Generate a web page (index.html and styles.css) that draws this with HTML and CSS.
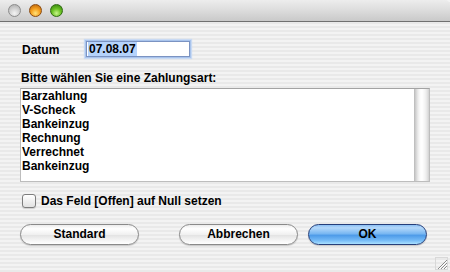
FILE: index.html
```html
<!DOCTYPE html>
<html lang="de">
<head>
<meta charset="utf-8">
<title>Zahlungsart</title>
<link rel="stylesheet" href="styles.css">
</head>
<body>
<div class="window">
  <div class="titlebar">
    <span class="light light-gray"></span>
    <span class="light light-orange"></span>
    <span class="light light-green"></span>
  </div>
  <div class="content">
    <div class="date-row">
      <span class="label">Datum</span>
      <div class="field"><span class="sel">07.08.07</span></div>
    </div>
    <div class="prompt">Bitte wählen Sie eine Zahlungsart:</div>
    <div class="list">
      <ul class="items">
        <li>Barzahlung</li>
        <li>V-Scheck</li>
        <li>Bankeinzug</li>
        <li>Rechnung</li>
        <li>Verrechnet</li>
        <li>Bankeinzug</li>
      </ul>
      <div class="scroll"></div>
    </div>
    <div class="check"><span class="box"></span><span>Das Feld [Offen] auf Null setzen</span></div>
    <div class="buttons">
      <button class="btn">Standard</button>
      <button class="btn btn-cancel">Abbrechen</button>
      <button class="btn btn-ok">OK</button>
    </div>
  </div>
  <svg class="grip" width="13" height="13" viewBox="0 0 13 13">
    <rect x="0.5" y="0.5" width="12" height="12" fill="none" stroke="#d8d8d8"/>
    <path d="M12 3 L3 12 M12 6 L6 12 M12 9 L9 12" stroke="#8a8a8a" stroke-width="1"/>
    <path d="M12 4 L4 12 M12 7 L7 12 M12 10 L10 12" stroke="#ffffff" stroke-width="1"/>
  </svg>
</div>
</body>
</html>
```
FILE: styles.css
```css
html, body {
  margin: 0;
  padding: 0;
}
body {
  width: 450px;
  height: 272px;
  overflow: hidden;
  font-family: "Liberation Sans", Arial, sans-serif;
  font-size: 12px;
  font-weight: bold;
  color: #000;
}
.window {
  position: relative;
  width: 450px;
  height: 272px;
  background: repeating-linear-gradient(to bottom, #f3f3f3 0px, #f3f3f3 2px, #e9e9e9 2px, #e9e9e9 4px);
}
.titlebar {
  height: 21px;
  border-bottom: 1px solid #707070;
  border-top-right-radius: 5px;
  background: linear-gradient(to bottom, #ededed 0%, #dcdcdc 50%, #c9c9c9 100%);
  display: flex;
  align-items: center;
  padding-left: 8px;
  box-sizing: content-box;
}
.light {
  width: 13px;
  height: 13px;
  border-radius: 50%;
  margin-right: 8px;
  box-sizing: border-box;
  margin-top: 0px;
}
.light-gray {
  background: radial-gradient(circle at 50% 75%, #f4f4f4 0%, #d4d4d4 45%, #a8a8a8 100%);
  border: 1px solid #8c8c8c;
}
.light-orange {
  background: radial-gradient(circle at 50% 75%, #ffe27a 0%, #f6a120 45%, #b45c05 100%);
  border: 1px solid #8a4a10;
}
.light-green {
  background: radial-gradient(circle at 50% 75%, #c8f58a 0%, #6bc224 45%, #2e7a0a 100%);
  border: 1px solid #2f6a12;
}
.content {
  padding-left: 20px;
}
.date-row {
  display: flex;
  align-items: center;
  margin-top: 19px;
  height: 16px;
}
.label {
  width: 64px;
  margin-left: 2px;
  line-height: 14px;
  padding-top: 1px;
}
.field {
  width: 104px;
  height: 16px;
  box-sizing: border-box;
  background: #fff;
  border: 1px solid #7b93c2;
  box-shadow: 0 0 0 1px #a9c4ec, 0 0 1px 2px #c9daf3;
  padding-left: 1px;
  line-height: 14px;
}
.sel {
  background: #b5d3fb;
  padding: 0 1px 0 1px;
  display: inline-block;
  height: 14px;
}
.prompt {
  margin-top: 14px;
  margin-left: 1px;
  line-height: 14px;
}
.list {
  margin-top: 3px;
  width: 410px;
  height: 94px;
  box-sizing: border-box;
  border: 1px solid #bdbdbd;
  border-top-color: #a3a3a3;
  background: #fff;
  display: flex;
}
.items {
  list-style: none;
  margin: 0;
  padding: 0 0 0 1px;
  flex: 1;
  line-height: 14px;
}
.scroll {
  width: 15px;
  background: linear-gradient(to right, #b9b9b9 0px, #d4d4d4 2px, #ebebeb 4px, #fbfbfb 6px, #ffffff 8px, #f3f3f3 11px, #e6e6e6 13px, #d0d0d0 15px);
}
.check {
  display: flex;
  align-items: center;
  margin-top: 12px;
  margin-left: 2px;
  height: 14px;
  line-height: 14px;
}
.box {
  width: 14px;
  height: 14px;
  box-sizing: border-box;
  border: 1px solid #7d7d7d;
  border-radius: 3px;
  background: linear-gradient(to bottom, #ffffff 0%, #f0f0f0 50%, #e2e2e2 100%);
  box-shadow: 0 1px 1px rgba(0,0,0,0.15);
  margin-right: 5px;
}
.buttons {
  display: flex;
  margin-top: 16px;
}
.btn {
  width: 119px;
  height: 21px;
  box-sizing: border-box;
  border: 1px solid #8a8a8a;
  border-radius: 11px;
  font-family: "Liberation Sans", Arial, sans-serif;
  font-size: 12px;
  font-weight: bold;
  color: #000;
  padding: 0;
  line-height: 19px;
  background: linear-gradient(to bottom, #ececec 0%, #ffffff 20%, #f0f0f0 50%, #e4e4e4 55%, #f4f4f4 80%, #ffffff 100%);
  box-shadow: 0 1px 1px rgba(0,0,0,0.18);
}
.btn-cancel {
  margin-left: 40px;
}
.btn-ok {
  margin-left: 10px;
  border-color: #263f7a;
  background: linear-gradient(to bottom, #8cc0f4 0%, #b4d8fa 15%, #7ab8f2 45%, #4f9ce9 55%, #73b9f6 80%, #a9e0ff 100%);
}
.grip {
  position: absolute;
  right: 2px;
  bottom: 2px;
}
```
